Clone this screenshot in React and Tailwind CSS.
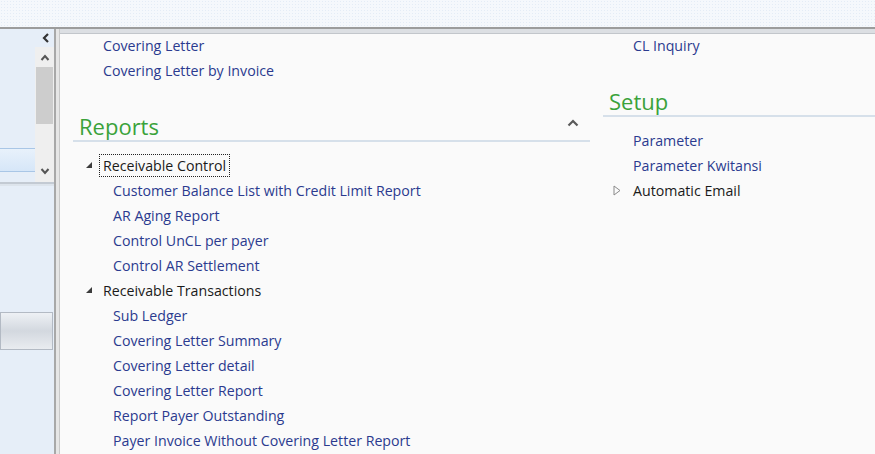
import React from "react";

const font = { fontFamily: '"Open Sans", "Noto Sans", sans-serif' };

const TreeArrow = ({ open }) =>
  open ? (
    <svg width="7" height="7" viewBox="0 0 7 7" className="shrink-0">
      <polygon points="6,0 6,6 0,6" fill="#3c3c3c" />
    </svg>
  ) : (
    <svg width="8" height="11" viewBox="0 0 8 11" className="shrink-0">
      <polygon points="1,1 7,5.5 1,10" fill="none" stroke="#8a8a8a" strokeWidth="1" />
    </svg>
  );

const Link = ({ children, pl }) => (
  <div className={`h-[25px] flex items-center text-[14.2px] text-[#2b3a8f] ${pl}`}>{children}</div>
);

const Heading = ({ children, right }) => (
  <div className="h-[30px] flex items-end justify-between border-b-2 border-[#d6e0ea] pl-[6px]">
    <span className="text-[22px] leading-[28px] text-[#3aa23a]">{children}</span>
    {right}
  </div>
);

const App = () => {
  return (
    <div className="w-[875px] h-[454px] flex flex-col bg-[#fafafa] overflow-hidden" style={font}>
      {/* top strip */}
      <div className="h-[27px] shrink-0 bg-[#f5f8fc] bg-[radial-gradient(#e4ecf6_1px,transparent_1px)] bg-[length:3px_3px]" />
      <div className="h-[2px] shrink-0 bg-[#9c9c9c]" />

      <div className="flex flex-1 min-h-0">
        {/* left panel */}
        <div className="w-[54px] shrink-0 bg-[#e6eef8] flex flex-col">
          <div className="h-[18px] flex items-center justify-end pr-[4px]">
            <svg width="8" height="10" viewBox="0 0 8 10">
              <path d="M6 1 L2 5 L6 9" fill="none" stroke="#333" strokeWidth="2.2" />
            </svg>
          </div>
          <div className="flex h-[135px]">
            <div className="flex-1 flex flex-col">
              <div className="h-[101px]" />
              <div className="h-[24px] border-y border-[#a9c6e6] bg-gradient-to-b from-[#e8f1fb] to-[#d6e6f8]" />
            </div>
            <div className="w-[19px] bg-[#efefef] flex flex-col items-center">
              <svg width="10" height="20" viewBox="0 0 10 20">
                <path d="M1.5 13 L5 9 L8.5 13" fill="none" stroke="#555" strokeWidth="2" />
              </svg>
              <div className="w-[17px] h-[57px] bg-[#cdcdcd]" />
              <div className="flex-1" />
              <svg width="10" height="20" viewBox="0 0 10 20">
                <path d="M1.5 7 L5 11 L8.5 7" fill="none" stroke="#555" strokeWidth="2" />
              </svg>
            </div>
          </div>
          <div className="h-[2px] bg-[#c3cad3]" />
          <div className="h-[2px] bg-[#dde4ec]" />
          <div className="h-[126px]" />
          <div className="h-[38px] w-[53px] border border-[#b3bac4] bg-gradient-to-b from-[#eef1f5] via-[#d3d8df] to-[#e9ecf0]" />
        </div>

        {/* splitter */}
        <div className="w-[6px] shrink-0 flex">
          <div className="w-[2px] bg-[#a8a8a8]" />
          <div className="w-[3px] bg-[#e6e6e6]" />
          <div className="w-[1px] bg-[#c9c9c9]" />
        </div>

        {/* main */}
        <div className="flex-1 flex flex-col">
          <div className="h-[4px] shrink-0 bg-[#dcdfe3]" />
          <div className="h-px shrink-0 bg-[#c2c6cb]" />
          <div className="flex -mt-px">
            {/* column 1 */}
            <div className="w-[530px] pl-[13px] flex flex-col">
              <Link pl="pl-[30px]">Covering Letter</Link>
              <Link pl="pl-[30px]">Covering Letter by Invoice</Link>
              <div className="mt-[29px]">
                <Heading
                  right={
                    <svg width="12" height="8" viewBox="0 0 12 8" className="mb-[13px] mr-[11px]">
                      <path d="M1.5 6.5 L6 2 L10.5 6.5" fill="none" stroke="#5a5a5a" strokeWidth="2.2" />
                    </svg>
                  }
                >
                  Reports
                </Heading>
              </div>
              <div className="mt-[11px] flex flex-col">
                <div className="h-[25px] flex items-center pl-[13px] gap-[6px]">
                  <TreeArrow open />
                  <span className="h-[23px] flex items-center px-[3px] border border-dotted border-[#222] text-[14.2px] text-[#1a1a1a]">
                    Receivable Control
                  </span>
                </div>
                <Link pl="pl-[40px]">Customer Balance List with Credit Limit Report</Link>
                <Link pl="pl-[40px]">AR Aging Report</Link>
                <Link pl="pl-[40px]">Control UnCL per payer</Link>
                <Link pl="pl-[40px]">Control AR Settlement</Link>
                <div className="h-[25px] flex items-center pl-[13px] gap-[6px]">
                  <TreeArrow open />
                  <span className="px-[4px] text-[14.2px] text-[#1a1a1a]">Receivable Transactions</span>
                </div>
                <Link pl="pl-[40px]">Sub Ledger</Link>
                <Link pl="pl-[40px]">Covering Letter Summary</Link>
                <Link pl="pl-[40px]">Covering Letter detail</Link>
                <Link pl="pl-[40px]">Covering Letter Report</Link>
                <Link pl="pl-[40px]">Report Payer Outstanding</Link>
                <Link pl="pl-[40px]">Payer Invoice Without Covering Letter Report</Link>
              </div>
            </div>

            {/* column 2 */}
            <div className="flex-1 pl-[13px] flex flex-col">
              <Link pl="pl-[30px]">CL Inquiry</Link>
              <div className="mt-[29px]">
                <Heading>Setup</Heading>
              </div>
              <div className="mt-[11px] flex flex-col">
                <Link pl="pl-[30px]">Parameter</Link>
                <Link pl="pl-[30px]">Parameter Kwitansi</Link>
                <div className="h-[25px] flex items-center pl-[10px] gap-[12px]">
                  <TreeArrow />
                  <span className="text-[14.2px] text-[#1a1a1a]">Automatic Email</span>
                </div>
              </div>
            </div>
          </div>
        </div>
      </div>
    </div>
  );
};

export default App;
